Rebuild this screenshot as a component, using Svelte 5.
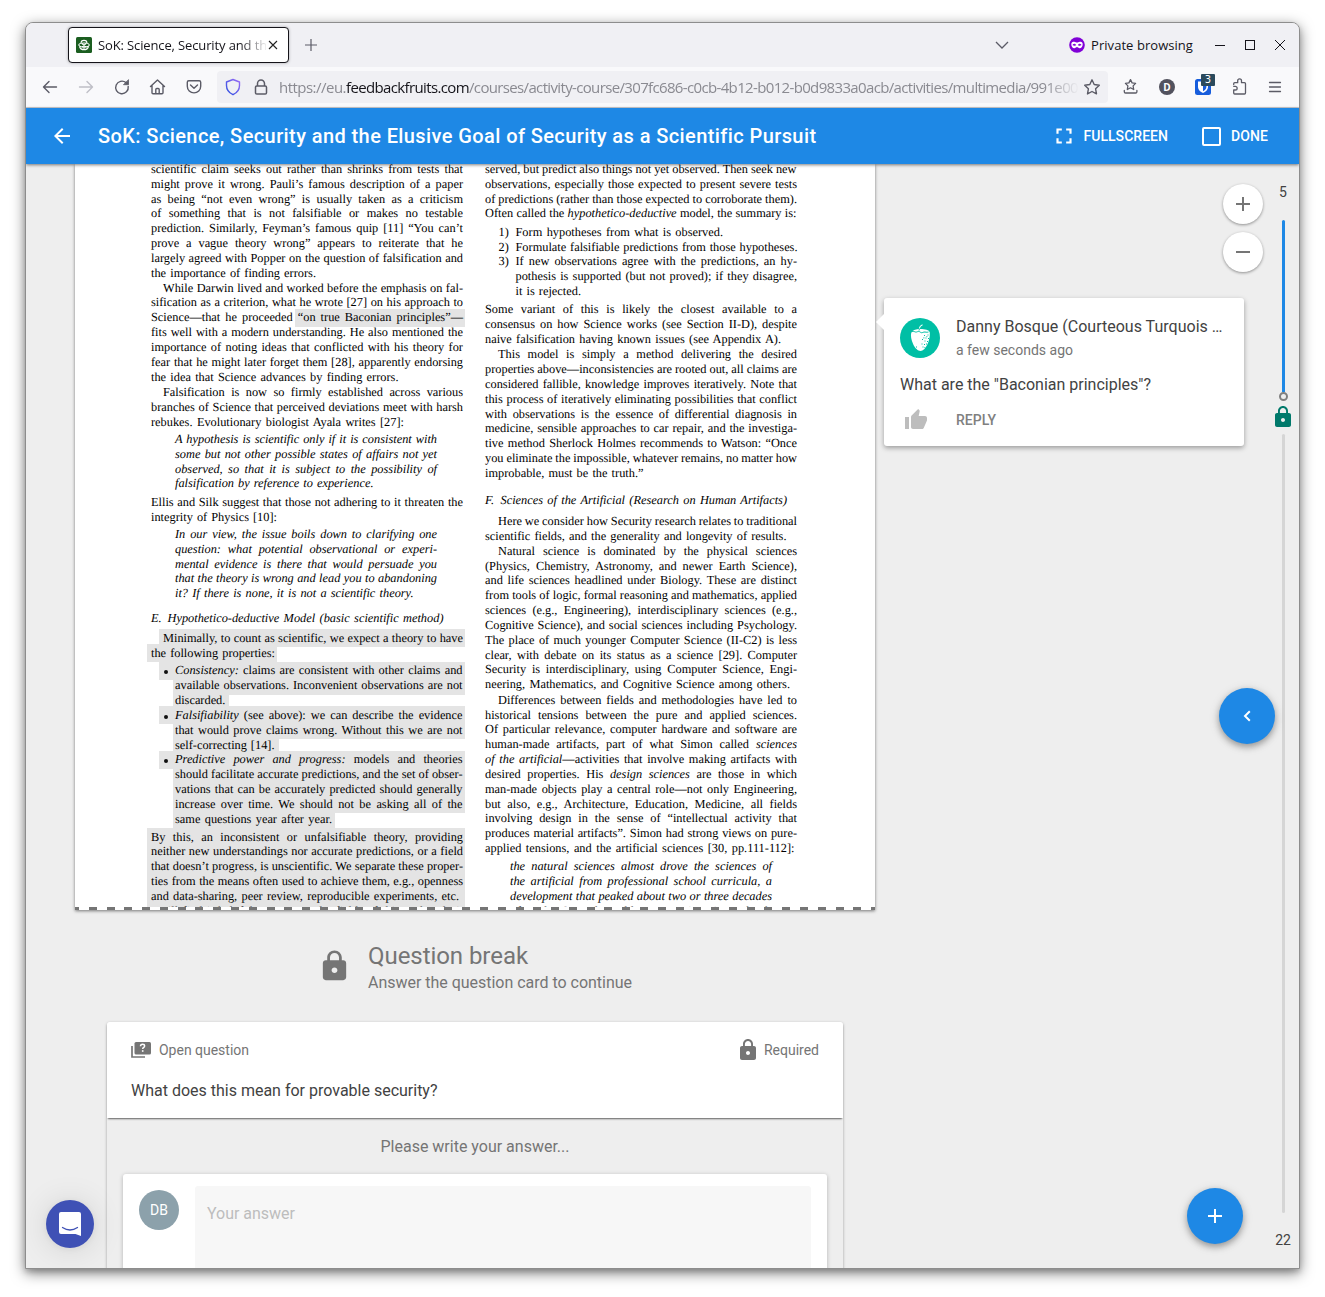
<script>
  const LOCK =
    'M18 8h-1V6c0-2.76-2.24-5-5-5S7 3.24 7 6v2H6c-1.1 0-2 .9-2 2v10c0 1.1.9 2 2 2h12c1.1 0 2-.9 2-2V10c0-1.1-.9-2-2-2zm-6 9c-1.1 0-2-.9-2-2s.9-2 2-2 2 .9 2 2-.9 2-2 2zm3.1-9H8.9V6c0-1.71 1.39-3.1 3.1-3.1s3.1 1.39 3.1 3.1v2z';

  // Spreads letters so that a label takes the given width.
  function fit(node, width) {
    const natural = node.getBoundingClientRect().width;
    node.style.letterSpacing = `${(width - natural) / node.textContent.length}px`;
  }

  // Stretches or shrinks word spaces so that a typeset line takes the given width.
  function justify(node, width) {
    const spaces = (node.textContent.match(/ /g) || []).length;
    const natural = node.getBoundingClientRect().width;
    if (spaces) node.style.wordSpacing = `${(width - natural) / spaces}px`;
  }

  // One typeset line: text (italics between asterisks), start, end, highlight range, list marker.
  const ln = (t, from = 0, to = 312, hl = null, mark = null) => ({
    parts: t.split('*'), from, width: to - from, hl, mark
  });
  const wide = [-4, 314];
  const item = [22, 314];
  const first = [8, 314];

  const left = [
    { gap: 0, lines: [
      ln('scientific claim seeks out rather than shrinks from tests that'),
      ln('might prove it wrong. Pauli’s famous description of a paper'),
      ln('as being “not even wrong” is usually taken as a criticism'),
      ln('of something that is not falsifiable or makes no testable'),
      ln('prediction. Similarly, Feyman’s famous quip [11] “You can’t'),
      ln('prove a vague theory wrong” appears to reiterate that he'),
      ln('largely agreed with Popper on the question of falsification and'),
      ln('the importance of finding errors.', 0, 165)
    ] },
    { gap: 0, lines: [
      ln('While Darwin lived and worked before the emphasis on fal-', 12),
      ln('sification as a criterion, what he wrote [27] on his approach to'),
      ln('Science—that he proceeded “on true Baconian principles”—', 0, 312, [144, 314]),
      ln('fits well with a modern understanding. He also mentioned the'),
      ln('importance of noting ideas that conflicted with his theory for'),
      ln('fear that he might later forget them [28], apparently endorsing'),
      ln('the idea that Science advances by finding errors.', 0, 247.5)
    ] },
    { gap: 0.6, lines: [
      ln('Falsification is now so firmly established across various', 12),
      ln('branches of Science that perceived deviations meet with harsh'),
      ln('rebukes. Evolutionary biologist Ayala writes [27]:', 0, 253)
    ] },
    { gap: 2.6, lines: [
      ln('*A hypothesis is scientific only if it is consistent with*', 24, 286),
      ln('*some but not other possible states of affairs not yet*', 24, 286),
      ln('*observed, so that it is subject to the possibility of*', 24, 286),
      ln('*falsification by reference to experience.*', 24, 222.5)
    ] },
    { gap: 3.5, lines: [
      ln('Ellis and Silk suggest that those not adhering to it threaten the'),
      ln('integrity of Physics [10]:', 0, 126)
    ] },
    { gap: 2.5, lines: [
      ln('*In our view, the issue boils down to clarifying one*', 24, 286),
      ln('*question: what potential observational or experi-*', 24, 286),
      ln('*mental evidence is there that would persuade you*', 24, 286),
      ln('*that the theory is wrong and lead you to abandoning*', 24, 286),
      ln('*it? If there is none, it is not a scientific theory.*', 24, 262.5)
    ] },
    { gap: 9.7, lines: [ln('*Hypothetico-deductive Model (basic scientific method)*', 16.5, 292.5, null, 'E.')] },
    { gap: 5.3, lines: [
      ln('Minimally, to count as scientific, we expect a theory to have', 12, 312, first),
      ln('the following properties:', 0, 124, [-4, 126])
    ] },
    { gap: 2.9, lines: [
      ln('*Consistency:* claims are consistent with other claims and', 24, 311.5, first, '•'),
      ln('available observations. Inconvenient observations are not', 24, 311.5, item),
      ln('discarded.', 24, 74, [22, 78]),
      ln('*Falsifiability* (see above): we can describe the evidence', 24, 311.5, first, '•'),
      ln('that would prove claims wrong. Without this we are not', 24, 311.5, item),
      ln('self-correcting [14].', 24, 123.5, [22, 128]),
      ln('*Predictive power and progress:* models and theories', 24, 311.5, first, '•'),
      ln('should facilitate accurate predictions, and the set of obser-', 24, 311.5, item),
      ln('vations that can be accurately predicted should generally', 24, 311.5, item),
      ln('increase over time. We should not be asking all of the', 24, 311.5, item),
      ln('same questions year after year.', 24, 181, [22, 184])
    ] },
    { gap: 3, lines: [
      ln('By this, an inconsistent or unfalsifiable theory, providing', 0, 312, wide),
      ln('neither new understandings nor accurate predictions, or a field', 0, 312, wide),
      ln('that doesn’t progress, is unscientific. We separate these proper-', 0, 312, wide),
      ln('ties from the means often used to achieve them, e.g., openness', 0, 312, wide),
      ln('and data-sharing, peer review, reproducible experiments, etc.', 0, 308, wide),
      ln('We’ll find it helpful to separate the fields of things that do it', 0, 312, wide)
    ] }
  ];

  const right = [
    { gap: 0, lines: [
      ln('served, but predict also things not yet observed. Then seek new', 0, 311.5),
      ln('observations, especially those expected to present severe tests'),
      ln('of predictions (rather than those expected to corroborate them).'),
      ln('Often called the *hypothetico-deductive* model, the summary is:', 0, 311.5)
    ] },
    { gap: 3.6, lines: [
      ln('Form hypotheses from what is observed.', 30.5, 238, null, '1)'),
      ln('Formulate falsifiable predictions from those hypotheses.', 30.5, 312.5, null, '2)'),
      ln('If new observations agree with the predictions, an hy-', 30.5, 312, null, '3)'),
      ln('pothesis is supported (but not proved); if they disagree,', 30.5, 312),
      ln('it is rejected.', 30.5, 96)
    ] },
    { gap: 3.1, lines: [
      ln('Some variant of this is likely the closest available to a'),
      ln('consensus on how Science works (see Section II-D), despite'),
      ln('naive falsification having known issues (see Appendix A).', 0, 296)
    ] },
    { gap: 0.7, lines: [
      ln('This model is simply a method delivering the desired', 13),
      ln('properties above—inconsistencies are rooted out, all claims are'),
      ln('considered fallible, knowledge improves iteratively. Note that'),
      ln('this process of iteratively eliminating possibilities that conflict'),
      ln('with observations is the essence of differential diagnosis in'),
      ln('medicine, sensible approaches to car repair, and the investiga-'),
      ln('tive method Sherlock Holmes recommends to Watson: “Once'),
      ln('you eliminate the impossible, whatever remains, no matter how'),
      ln('improbable, must be the truth.”', 0, 158.5)
    ] },
    { gap: 12.3, lines: [ln('*Sciences of the Artificial (Research on Human Artifacts)*', 15.5, 302, null, 'F.')] },
    { gap: 6.2, lines: [
      ln('Here we consider how Security research relates to traditional', 13),
      ln('scientific fields, and the generality and longevity of results.', 0, 301.5)
    ] },
    { gap: 0.1, lines: [
      ln('Natural science is dominated by the physical sciences', 13),
      ln('(Physics, Chemistry, Astronomy, and newer Earth Science),'),
      ln('and life sciences headlined under Biology. These are distinct'),
      ln('from tools of logic, formal reasoning and mathematics, applied'),
      ln('sciences (e.g., Engineering), interdisciplinary sciences (e.g.,'),
      ln('Cognitive Science), and social sciences including Psychology.'),
      ln('The place of much younger Computer Science (II-C2) is less'),
      ln('clear, with debate on its status as a science [29]. Computer'),
      ln('Security is interdisciplinary, using Computer Science, Engi-'),
      ln('neering, Mathematics, and Cognitive Science among others.', 0, 305)
    ] },
    { gap: 0.8, lines: [
      ln('Differences between fields and methodologies have led to', 13),
      ln('historical tensions between the pure and applied sciences.'),
      ln('Of particular relevance, computer hardware and software are'),
      ln('human-made artifacts, part of what Simon called *sciences*'),
      ln('*of the artificial*—activities that involve making artifacts with'),
      ln('desired properties. His *design sciences* are those in which'),
      ln('man-made objects play a central role—not only Engineering,'),
      ln('but also, e.g., Architecture, Education, Medicine, all fields'),
      ln('involving design in the sense of “intellectual activity that'),
      ln('produces material artifacts”. Simon had strong views on pure-'),
      ln('applied tensions, and the artificial sciences [30, pp.111-112]:', 0, 309.5)
    ] },
    { gap: 3.2, lines: [
      ln('*the natural sciences almost drove the sciences of*', 25, 287),
      ln('*the artificial from professional school curricula, a*', 25, 287),
      ln('*development that peaked about two or three decades*', 25, 287),
      ln('*after the Second World War. Engineering schools*', 25, 287)
    ] }
  ];
</script>

{#snippet column(blocks)}
  <div class="column">
    {#each blocks as block}
      <div class="block" style:margin-top="{block.gap}px">
        {#each block.lines as line}
          <div class="line">
            {#if line.hl}<span class="mark" style:left="{line.hl[0]}px" style:width="{line.hl[1] - line.hl[0]}px"></span>{/if}
            {#if line.mark === '•'}<span class="dot"></span>{:else if line.mark}<span class="num" class:letter={line.mark.endsWith('.')}>{line.mark}</span>{/if}
            <span class="set" style:margin-left="{line.from}px" use:justify={line.width}>{#each line.parts as p, i}{#if i % 2}<i>{p}</i>{:else}{p}{/if}{/each}</span>
          </div>
        {/each}
      </div>
    {/each}
  </div>
{/snippet}

<div class="desktop">
  <div class="window">
    <div class="tabs">
      <div class="tab">
        <svg class="favicon" width="16" height="16" viewBox="0 0 16 16">
          <rect width="16" height="16" rx="1.5" fill="#1b5e20" />
          <g fill="none" stroke="#fff" stroke-width="1.1">
            <path d="M5 6.2C5 4.600 6.300 3.400 8 3.400s3 1.200 3 2.800" />
            <ellipse cx="8" cy="8" rx="5.200" ry="2" />
            <path d="M3.500 9.500c.5 2 2.300 3.200 4.500 3.200s4-1.200 4.500-3.200M6 6.500l4 3.500M10 6.500L6 10M8 9.500v3" />
          </g>
        </svg>
        <div class="tab-title"><span use:fit={169}>SoK: Science, Security and th</span></div>
        <svg class="close" width="10" height="10" viewBox="0 0 10 10"><path d="M1 1l8 8M9 1l-8 8" stroke="#222" stroke-width="1.1" /></svg>
      </div>
      <svg class="newtab" width="14" height="14" viewBox="0 0 14 14"><path d="M7 1v12M1 7h12" stroke="#5b5b66" stroke-width="1.2" /></svg>
      <svg class="chevron" width="14" height="8" viewBox="0 0 14 8"><path d="M1 1l6 6 6-6" fill="none" stroke="#5b5b66" stroke-width="1.3" /></svg>
      <svg class="mask" width="16" height="16" viewBox="0 0 16 16">
        <circle cx="8" cy="8" r="7.800" fill="#8000d7" />
        <path d="M2.300 7c0-1.700 1.300-2.300 2.900-2.300 1.300 0 1.900.9 2.800.9s1.500-.9 2.800-.9c1.600 0 2.900.6 2.900 2.300 0 2.400-1.200 4.200-3 4.200-1.400 0-1.800-1.200-2.700-1.200s-1.300 1.200-2.700 1.200c-1.800 0-3-1.800-3-4.200z" fill="#fff" />
        <path d="M3.800 7.800q1.500-1.400 3 .1-1.600 1.100-3-.1zM9.200 7.900q1.500-1.500 3-.1-1.400 1.200-3 .1z" fill="#8000d7" stroke="#8000d7" stroke-width=".6" />
      </svg>
      <div class="private"><span use:fit={102}>Private browsing</span></div>
      <svg class="controls" width="70" height="12" viewBox="0 0 70 12" fill="none" stroke="#15141a" stroke-width="1">
        <path d="M0 6.500h10" /><rect x="30.500" y="1.500" width="9" height="9" /><path d="M60 1l10 10M70 1L60 11" />
      </svg>
    </div>

    <div class="toolbar">
      <svg class="nav" width="160" height="20" viewBox="0 0 160 20" fill="none" stroke="#5b5b66" stroke-width="1.400" stroke-linecap="round" stroke-linejoin="round">
        <path d="M14.500 10H1.500M7 4.500L1.500 10 7 15.500" />
        <path d="M37.500 10h13M45 4.500l5.500 5.500-5.500 5.500" stroke="#bfbfc6" />
        <path d="M86.200 9.500a6.300 6.300 0 1 1-2.200-3.900" />
        <path d="M86.500 3v4.700h-4.700z" fill="#5b5b66" stroke-width=".8" />
        <path d="M108.500 9.500L115.500 3l7 6.500M110 8.500v7.200q0 1 1 1h9q1 0 1-1V8.500M113.800 16.500v-4q0-1 1-1h1.400q1 0 1 1v4" />
        <path d="M146.800 3.700h10.400q1.500 0 1.500 1.500v4a6.700 6.700 0 0 1-13.400 0v-4q0-1.500 1.500-1.500zM148.500 8l3.500 3.300L155.500 8" />
      </svg>
      <div class="urlbar">
        <svg width="44" height="20" viewBox="0 0 44 20" fill="none">
          <defs><linearGradient id="shield" x1="0" y1="1" x2="1" y2="0"><stop offset="0" stop-color="#2b50e0" /><stop offset="1" stop-color="#9a6cf5" /></linearGradient></defs>
          <path d="M8 2.500l6.500 2.500v3.500c0 4-2.500 7.300-6.500 9.200-4-1.900-6.500-5.200-6.500-9.200V5z" stroke="url(#shield)" stroke-width="1.400" stroke-linejoin="round" />
          <g stroke="#5b5b66" stroke-width="1.500"><rect x="30.500" y="9" width="11" height="8" rx="1.300" /><path d="M32.500 9V6.500a3.500 3.500 0 0 1 7 0V9" /></g>
        </svg>
        <div class="url"><span use:fit={67}>https://eu.</span><span class="host" use:fit={123}>feedbackfruits.com</span><span use:fit={609}>/courses/activity-course/307fc686-c0cb-4b12-b012-b0d9833a0acb/activities/multimedia/991e00</span></div>
        <svg class="star" width="18" height="18" viewBox="0 0 18 18"><path d="M9 1.800l2.200 4.700 5.100.7-3.700 3.600.9 5.100L9 13.500l-4.500 2.400.9-5.100L1.700 7.200l5.100-.7z" fill="none" stroke="#5b5b66" stroke-width="1.400" stroke-linejoin="round" /></svg>
      </div>
      <div class="extensions">
        <svg width="160" height="26" viewBox="0 0 160 26" fill="none" stroke="#5b5b66" stroke-width="1.300" stroke-linejoin="round" stroke-linecap="round">
          <path d="M7.500 5.600l1.600 3.300 3.500.5-2.500 2.500.6 3.600-3.200-1.700-3.200 1.700.6-3.600-2.500-2.500 3.500-.5z" />
          <path d="M1.300 16.500v1.300q0 1.200 1.200 1.200h10.200q1.200 0 1.200-1.200v-1.300" />
          <circle cx="44" cy="13" r="8" fill="#52525e" stroke="none" />
          <rect x="72" y="5" width="16" height="16" rx="2.500" fill="#175ddc" stroke="none" />
          <path d="M75 7.500h10v5.500c0 3-2.500 4.800-5 6-2.500-1.200-5-3-5-6z" fill="#fff" stroke="none" />
          <path d="M80 9v8.300c1.800-1 3.400-2.300 3.400-4.300V9z" fill="#175ddc" stroke="none" />
          <path d="M110.700 10.500v-.8q0-1 1-1h3v-1.900a1.900 1.900 0 0 1 3.800 0v1.900h3q1 0 1 1v9.300q0 1-1 1h-9.800q-1 0-1-1v-3h1.600a1.800 1.800 0 0 0 0-3.700h-1.600" />
          <path d="M146.500 8.500h11M146.500 13h11M146.500 17.500h11" />
        </svg>
        <span class="d">D</span><span class="badge">3</span>
      </div>
    </div>

    <header>
      <svg width="24" height="24" viewBox="0 0 24 24" fill="#fff"><path d="M20 11H7.830l5.590-5.590L12 4l-8 8 8 8 1.410-1.410L7.830 13H20v-2z" /></svg>
      <h1><span use:fit={718}>SoK: Science, Security and the Elusive Goal of Security as a Scientific Pursuit</span></h1>
      <button class="full"><svg width="26" height="26" viewBox="0 0 24 24" fill="#fff"><path d="M5 5h5v2H7v3H5V5m9 0h5v5h-2V7h-3V5m3 9h2v5h-5v-2h3v-3m-7 3v2H5v-5h2v3h3z" /></svg><span use:fit={84.500}>FULLSCREEN</span></button>
      <button class="done"><i class="checkbox"></i><span use:fit={37}>DONE</span></button>
    </header>

    <main>
      <section class="document">
        <div class="page">
          <div class="columns">{@render column(left)}{@render column(right)}</div>
          <div class="tear"></div>
        </div>

        <div class="break">
          <svg width="35" height="34" viewBox="0 0 24 24" preserveAspectRatio="none"><path d={LOCK} /></svg>
          <div>
            <h2><span use:fit={160}>Question break</span></h2>
            <p><span use:fit={264}>Answer the question card to continue</span></p>
          </div>
        </div>

        <div class="question">
          <div class="prompt">
            <div class="meta">
              <svg width="20" height="16" viewBox="0 0 20 16">
                <path d="M1 4v11h13" fill="none" stroke="#757575" stroke-width="1.700" />
                <rect x="3.500" y="0" width="16.500" height="12.500" rx="1.500" fill="#757575" />
                <path d="M9.500 4.200q.1-1.900 2.100-1.900 2 0 2 1.700 0 1-1.100 1.600-.8.500-.8 1.300" fill="none" stroke="#fff" stroke-width="1.500" /><rect x="10.900" y="8.200" width="1.600" height="1.600" fill="#fff" />
              </svg>
              <span class="kind"><span use:fit={90}>Open question</span></span>
              <svg class="req" width="24" height="24" viewBox="0 0 24 24"><path d={LOCK} /></svg>
              <span use:fit={55}>Required</span>
            </div>
            <p class="ask"><span use:fit={306.500}>What does this mean for provable security?</span></p>
          </div>
          <p class="hint"><span use:fit={189}>Please write your answer...</span></p>
          <div class="answer">
            <div class="initials">DB</div>
            <div class="field"><span use:fit={88}>Your answer</span></div>
          </div>
        </div>
      </section>

      <article class="comment">
        <div class="author">
          <svg width="40" height="40" viewBox="0 0 40 40">
            <circle cx="20" cy="20" r="20" fill="#00bfa5" />
            <path d="M12.500 13c2-1.500 5-2 8-2 4 0 9 .8 9.300 3.600.3 3-.5 8.500-2.600 12.200C25.500 30.500 23 33 20.500 33s-5.500-2.700-7.300-6.700c-2-4.300-2.700-9-2-11.300z" fill="#fff" />
            <path d="M12 13.500c1.500-1 3 1 4.500.5s2.500-1 4 .3 3-.7 4.500-.3 3 .2 3.500 0M19 12.500c.3-2.500 1.500-4 3.500-5" fill="none" stroke="#00bfa5" stroke-width="1" />
            <path d="M19.300 10.500c.3-1.800 1.200-3 3.200-3.800" fill="none" stroke="#fff" stroke-width="1.100" />
            <path d="M24 17.500h1M27.500 17h1M25.500 20h1M22 21.500h1M28 20.500h1M24.500 23h1M27 23.500h1M21.500 26h1M24 26.500h1M26 26h1M22.500 29h1M24.500 29.500h.8M16 29h1M26.500 18.500h.8M23.500 19.800h.8" stroke="#00bfa5" stroke-width="1.200" />
          </svg>
          <div>
            <p class="name"><span use:fit={266.500}>Danny Bosque (Courteous Turquois …</span></p>
            <p class="time"><span use:fit={117}>a few seconds ago</span></p>
          </div>
        </div>
        <p class="body"><span use:fit={251}>What are the "Baconian principles"?</span></p>
        <div class="actions">
          <svg width="24" height="24" viewBox="0 0 24 24" fill="#bdbdbd"><path d="M1 21h4V9H1v12zm22-11c0-1.100-.9-2-2-2h-6.310l.95-4.570.03-.32c0-.41-.17-.79-.44-1.060L14.170 1 7.590 7.590C7.220 7.950 7 8.450 7 9v10c0 1.100.9 2 2 2h9c.83 0 1.540-.5 1.840-1.220l3.020-7.050c.09-.23.14-.47.14-.73v-2z" /></svg>
          <span use:fit={40}>REPLY</span>
        </div>
      </article>

      <div class="zoomers">
        <button><svg width="14" height="14" viewBox="0 0 14 14"><path d="M7 0v14M0 7h14" stroke="#757575" stroke-width="2" /></svg></button>
        <button><svg width="14" height="14" viewBox="0 0 14 14"><path d="M0 7h14" stroke="#757575" stroke-width="2" /></svg></button>
      </div>

      <aside class="rail">
        <span>5</span>
        <i class="read"></i>
        <i class="knob"></i>
        <svg width="24" height="24" viewBox="0 0 24 24" fill="#00796b"><path d={LOCK} /></svg>
        <i class="rest"></i>
        <span>22</span>
      </aside>

      <button class="fab collapse"><svg width="8" height="12" viewBox="0 0 8 12"><path d="M6.800 1.200L2 6l4.800 4.800" fill="none" stroke="#fff" stroke-width="2" /></svg></button>
      <button class="fab add"><svg width="14" height="14" viewBox="0 0 14 14"><path d="M7 0v14M0 7h14" stroke="#fff" stroke-width="2" /></svg></button>
      <button class="chat">
        <svg width="22" height="24" viewBox="0 0 22 24"><path d="M2 0h18q2 0 2 2v22l-5.500-2H2q-2 0-2-2V2q0-2 2-2z" fill="#fff" /><path d="M3.500 15.500q7.500 5 15 0" fill="none" stroke="#3f51b5" stroke-width="1.300" stroke-linecap="round" /></svg>
      </button>
    </main>
  </div>
</div>

<style>
  :global(body) { margin: 0; background: #fff; }
  .desktop { box-sizing: border-box; width: 1325px; height: 1297px; padding: 22px 25px; overflow: hidden; font-family: Roboto, 'Liberation Sans', sans-serif; }
  .window { width: 1273px; height: 1245px; border: 1px solid #8d8d8d; border-radius: 8px 8px 0 0; overflow: hidden; box-shadow: 0 4px 14px rgba(0, 0, 0, .5), 0 3px 5px rgba(0, 0, 0, .15); display: flex; flex-direction: column; background: #eee; }
  span { display: inline-block; white-space: pre; }
  p, h1, h2 { margin: 0; font-weight: 400; }
  svg { display: block; flex: none; }
  button { border: 0; padding: 0; background: none; font: inherit; color: inherit; display: flex; align-items: center; justify-content: center; }

  .tabs { height: 44px; flex: none; background: #f0f0f4; display: flex; align-items: center; font: 13px/20px 'Open Sans', 'Noto Sans', sans-serif; color: #15141a; }
  .tab { box-sizing: border-box; width: 221px; height: 36px; margin-left: 42px; padding: 0 10px 0 7px; border: 1px solid #15141a; border-radius: 4px; background: #fff; display: flex; align-items: center; box-shadow: 0 0 3px rgba(0, 0, 0, .3); }
  .tab-title { width: 168px; margin: 0 2px 0 6px; overflow: hidden; -webkit-mask-image: linear-gradient(90deg, #000 142px, transparent 170px); mask-image: linear-gradient(90deg, #000 142px, transparent 170px); }
  .newtab { margin-left: 15px; }
  .chevron { margin-left: 677px; }
  .mask { margin-left: 60px; }
  .private { margin-left: 6px; width: 102px; }
  .controls { margin-left: 22px; }

  .toolbar { box-sizing: border-box; height: 41px; flex: none; background: #f9f9fb; border-bottom: 1px solid #ccccd0; display: flex; align-items: center; }
  .nav { margin-left: 16px; }
  .urlbar { box-sizing: border-box; width: 891px; height: 32px; margin-left: 15px; padding: 0 6px 0 8px; background: #f0f0f4; border-radius: 4px; display: flex; align-items: center; }
  .url { width: 799px; height: 22px; margin: 0 5px 0 10px; overflow: hidden; white-space: nowrap; display: flex; font: 15px/22px 'Open Sans', 'Noto Sans', sans-serif; color: #8a8a91; -webkit-mask-image: linear-gradient(90deg, #000 765px, transparent 800px); mask-image: linear-gradient(90deg, #000 765px, transparent 800px); }
  .host { color: #15141a; }
  .extensions { position: relative; margin-left: 15px; }
  .d { position: absolute; left: 39px; top: 6px; width: 10px; text-align: center; font: 700 10px/14px 'Open Sans', sans-serif; color: #fff; }
  .badge { position: absolute; left: 78px; top: 0; width: 14px; height: 12px; background: #2b4a5c; color: #fff; border-radius: 1px; text-align: center; font: 10px/12px 'DejaVu Sans', sans-serif; }

  header { position: relative; z-index: 3; height: 56px; flex: none; background: #1e88e5; color: #fff; display: flex; align-items: center; padding-left: 24px; box-shadow: 0 1px 3px rgba(0, 0, 0, .5); }
  h1 { width: 718px; margin-left: 24px; font: 500 20px/28px Roboto, sans-serif; }
  header button { font-size: 14px; font-weight: 500; }
  .full { margin-left: 234.500px; gap: 7px; }
  .done { margin-left: 34px; gap: 10px; }
  .checkbox { box-sizing: border-box; width: 19px; height: 19px; border: 2px solid #fff; border-radius: 2px; }

  main { position: relative; height: 1104px; flex: none; display: flex; align-items: flex-start; background: #eee; overflow: hidden; }
  .document { width: 800px; margin-left: 49px; flex: none; }
  .page { height: 746px; background: #fff; box-shadow: 0 1px 3px rgba(0, 0, 0, .5); }
  .columns { height: 743px; padding-left: 76px; display: flex; gap: 22px; overflow: hidden; }
  .column { width: 312px; margin-top: -2.100px; isolation: isolate; font: 12.35px/14.83px 'Liberation Serif', 'Times New Roman', serif; color: #000; text-rendering: geometricPrecision; }
  .line { position: relative; height: 14.83px; display: flex; }
  .mark { position: absolute; z-index: -1; top: -1.500px; bottom: -1.500px; background: #e4e4e4; }
  .dot { position: absolute; left: 13px; top: 7px; width: 4px; height: 4px; border-radius: 50%; background: #111; }
  .num { position: absolute; left: 13.500px; top: 0; }
  .letter { left: 0; font-style: italic; }
  .tear { height: 3px; background: repeating-linear-gradient(90deg, #757575 0 8px, transparent 8px 17.780px) -4px 0 / 900px 3px; }

  .break { display: flex; align-items: center; height: 112px; padding-left: 242px; box-sizing: border-box; gap: 16px; color: #757575; fill: #757575; }
  .break h2 { padding-top: 3px; font-size: 24px; line-height: 30px; }
  .break p { font-size: 16px; line-height: 24px; }
  .question { width: 736px; margin: 0 auto; height: 300px; box-shadow: 0 1px 3px rgba(0, 0, 0, .35); border-radius: 3px 3px 0 0; }
  .prompt { box-sizing: border-box; height: 96px; padding: 16px 24px 0; background: #fff; border-radius: 3px 3px 0 0; box-shadow: 0 2px 2px -1px rgba(0, 0, 0, .6); }
  .meta { display: flex; align-items: center; height: 24px; font-size: 14px; color: #757575; fill: #757575; }
  .kind { margin-left: 8px; flex: 1; }
  .req { margin-right: 4px; }
  .ask { margin-top: 17px; font-size: 16px; line-height: 24px; color: #424242; }
  .hint { padding: 17px 0 15px; height: 24px; line-height: 24px; font-size: 16px; text-align: center; color: #757575; }
  .answer { height: 200px; margin: 0 16px; padding: 12px 16px 0; background: #fff; border-radius: 3px; box-shadow: 0 1px 4px rgba(0, 0, 0, .25); display: flex; gap: 16px; }
  .initials { width: 40px; height: 40px; margin-top: 4px; border-radius: 50%; background: #8ca1ab; color: #fff; font-size: 14px; line-height: 40px; text-align: center; }
  .field { flex: 1; padding: 16px 12px; background: #f7f7f7; border-radius: 3px; font-size: 16px; line-height: 24px; color: #bdbdbd; }

  .comment { position: relative; box-sizing: border-box; width: 360px; height: 148px; flex: none; margin: 134px 0 0 9px; padding: 17px 16px 0; background: #fff; border-radius: 3px; box-shadow: 0 2px 5px rgba(0, 0, 0, .35); }
  .comment::before { content: ''; position: absolute; left: -8px; top: 16px; border: 8px solid transparent; border-left: 0; border-right-color: #fff; }
  .author { display: flex; gap: 16px; }
  .author svg { margin-top: 3px; }
  .name, .body { font-size: 16px; line-height: 24px; color: #424242; }
  .time { margin-top: -1px; font-size: 14px; line-height: 24px; color: #757575; }
  .body { margin-top: 11px; }
  .actions { margin: 11px 0 0 4px; display: flex; align-items: center; gap: 28px; font-size: 14px; font-weight: 500; color: #808080; }

  .zoomers { position: absolute; right: 36px; top: 20px; display: grid; gap: 8px; }
  .zoomers button { width: 40px; height: 40px; border-radius: 50%; background: #fff; box-shadow: 0 1px 3px rgba(0, 0, 0, .4); }
  .rail { position: absolute; right: 0; top: 0; width: 32px; height: 1104px; display: flex; flex-direction: column; align-items: center; font-size: 14px; color: #424242; }
  .rail span { line-height: 16px; margin-top: 20px; }
  .rail i { flex: none; }
  .read { width: 3px; height: 172px; margin-top: 20px; background: #1e88e5; border-radius: 2px 2px 0 0; }
  .knob { box-sizing: border-box; width: 9px; height: 9px; border: 2px solid #808080; border-radius: 50%; background: #eee; }
  .rail svg { margin-top: 4px; }
  .rest { width: 3px; height: 779px; margin-top: 5px; background: #d5d5d5; border-radius: 2px; }
  .rail .rest + span { margin-top: 19px; }
  .fab { position: absolute; width: 56px; height: 56px; border-radius: 50%; background: #1e88e5; box-shadow: 0 3px 6px rgba(0, 0, 0, .3), 0 2px 12px rgba(0, 0, 0, .12); }
  .collapse { right: 24px; top: 524px; }
  .add { right: 56px; top: 1024px; }
  .chat { position: absolute; left: 20px; top: 1036px; width: 48px; height: 48px; border-radius: 50%; background: #3f51b5; box-shadow: 0 2px 32px rgba(0, 0, 0, .12), 0 1px 6px rgba(0, 0, 0, .06); }
</style>
